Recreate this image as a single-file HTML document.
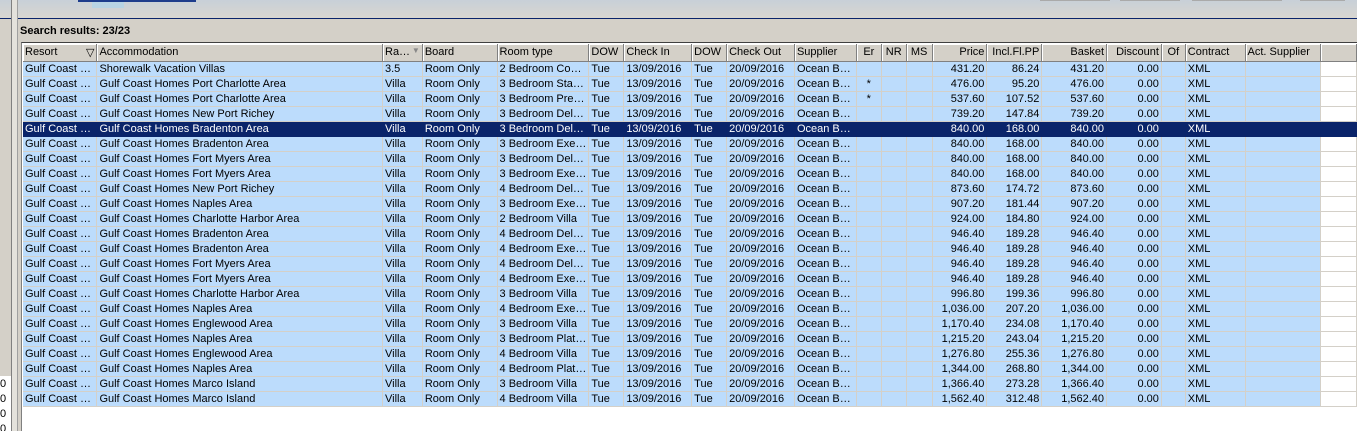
<!DOCTYPE html>
<html><head><meta charset="utf-8"><style>
*{margin:0;padding:0;box-sizing:border-box}
html,body{width:1357px;height:431px;overflow:hidden}
body{background:#d4d0c8;font-family:"Liberation Sans",sans-serif;font-size:11px;position:relative}
#top{position:absolute;left:0;top:0;width:1357px;height:19px;background:linear-gradient(#c8d0d8,#d8d6d0);border-bottom:1px solid #0a246a}
#sr{position:absolute;left:20px;top:25px;font-weight:bold;font-size:11px}
#left{position:absolute;left:0;top:20px;width:11px;height:411px;background:#d4d0c8}
#leftw{position:absolute;left:0;top:376px;width:11px;height:55px;background:#fff;font-size:11px;line-height:15px;padding-top:1px}
#l1{position:absolute;left:11px;top:0;width:1px;height:431px;background:#808080}
#l2{position:absolute;left:12px;top:0;width:5px;height:431px;background:#e4e2dc}
#l3{position:absolute;left:17px;top:0;width:1px;height:431px;background:#a0a0a0}
#grid{position:absolute;left:21px;top:42px;width:1336px;height:389px;background:#fff;border-left:1px solid #808080;border-top:1px solid #404040}
table{border-collapse:collapse;table-layout:fixed;position:absolute;left:1px;top:1px}
th{height:17px;background:#d4d0c8;font-weight:normal;text-align:left;padding:0 2px;border-right:1px solid #808080;border-bottom:1px solid #808080;box-shadow:inset 1px 1px 0 #fff;white-space:nowrap;overflow:hidden}
td{height:15px;background:#bcdcfc;border-right:1px solid #d4d0c8;border-bottom:1px solid #d4d0c8;padding:0 2px;white-space:nowrap;overflow:hidden;line-height:14px}
td.f{background:#fff}
.r{text-align:right}
.c{text-align:center}
tr.s td{background:#0a246a;color:#fff;border-color:#0a246a}
</style></head><body>
<div id="top">
<div style="position:absolute;left:92px;top:0;width:32px;height:8px;background:#b8d4e4"></div>
<div style="position:absolute;left:78px;top:0;width:118px;height:2px;background:#1c3c8c"></div>
<div style="position:absolute;left:1040px;top:0;width:70px;height:1px;background:#aaa"></div>
<div style="position:absolute;left:1120px;top:0;width:60px;height:1px;background:#aaa"></div>
<div style="position:absolute;left:1192px;top:0;width:90px;height:1px;background:#aaa"></div>
<div style="position:absolute;left:1300px;top:0;width:45px;height:1px;background:#aaa"></div>
</div>
<div id="left"></div>
<div id="leftw">0<br>0<br>0<br>0</div>
<div id="l1"></div><div id="l2"></div><div id="l3"></div>
<div id="sr">Search results: 23/23</div>
<div id="grid">
<table>
<colgroup><col style="width:74px"><col style="width:287px"><col style="width:40px"><col style="width:75px"><col style="width:89px"><col style="width:35px"><col style="width:68px"><col style="width:35px"><col style="width:68px"><col style="width:62px"><col style="width:25px"><col style="width:25px"><col style="width:26px"><col style="width:55px"><col style="width:55px"><col style="width:65px"><col style="width:55px"><col style="width:24px"><col style="width:60px"><col style="width:76px"><col style="width:36px"></colgroup>
<tr><th>Resort <span style="float:right">&#9661;</span></th><th>Accommodation</th><th>Ra… <span style="float:right;color:#888;font-size:8px">&#9660;</span></th><th>Board</th><th>Room type</th><th>DOW</th><th>Check In</th><th>DOW</th><th>Check Out</th><th>Supplier</th><th class="c">Er</th><th class="c">NR</th><th class="c">MS</th><th class="r">Price</th><th class="r">Incl.Fl.PP</th><th class="r">Basket</th><th class="r">Discount</th><th class="c">Of</th><th>Contract</th><th>Act. Supplier</th><th></th></tr>
<tr><td>Gulf Coast …</td><td>Shorewalk Vacation Villas</td><td>3.5</td><td>Room Only</td><td>2 Bedroom Co…</td><td>Tue</td><td>13/09/2016</td><td>Tue</td><td>20/09/2016</td><td>Ocean B…</td><td></td><td></td><td></td><td class="r">431.20</td><td class="r">86.24</td><td class="r">431.20</td><td class="r">0.00</td><td></td><td>XML</td><td></td><td class="f"></td></tr>
<tr><td>Gulf Coast …</td><td>Gulf Coast Homes Port Charlotte Area</td><td>Villa</td><td>Room Only</td><td>3 Bedroom Sta…</td><td>Tue</td><td>13/09/2016</td><td>Tue</td><td>20/09/2016</td><td>Ocean B…</td><td class="c">*</td><td></td><td></td><td class="r">476.00</td><td class="r">95.20</td><td class="r">476.00</td><td class="r">0.00</td><td></td><td>XML</td><td></td><td class="f"></td></tr>
<tr><td>Gulf Coast …</td><td>Gulf Coast Homes Port Charlotte Area</td><td>Villa</td><td>Room Only</td><td>3 Bedroom Pre…</td><td>Tue</td><td>13/09/2016</td><td>Tue</td><td>20/09/2016</td><td>Ocean B…</td><td class="c">*</td><td></td><td></td><td class="r">537.60</td><td class="r">107.52</td><td class="r">537.60</td><td class="r">0.00</td><td></td><td>XML</td><td></td><td class="f"></td></tr>
<tr><td>Gulf Coast …</td><td>Gulf Coast Homes New Port Richey</td><td>Villa</td><td>Room Only</td><td>3 Bedroom Del…</td><td>Tue</td><td>13/09/2016</td><td>Tue</td><td>20/09/2016</td><td>Ocean B…</td><td></td><td></td><td></td><td class="r">739.20</td><td class="r">147.84</td><td class="r">739.20</td><td class="r">0.00</td><td></td><td>XML</td><td></td><td class="f"></td></tr>
<tr class="s"><td>Gulf Coast …</td><td>Gulf Coast Homes Bradenton Area</td><td>Villa</td><td>Room Only</td><td>3 Bedroom Del…</td><td>Tue</td><td>13/09/2016</td><td>Tue</td><td>20/09/2016</td><td>Ocean B…</td><td></td><td></td><td></td><td class="r">840.00</td><td class="r">168.00</td><td class="r">840.00</td><td class="r">0.00</td><td></td><td>XML</td><td></td><td></td></tr>
<tr><td>Gulf Coast …</td><td>Gulf Coast Homes Bradenton Area</td><td>Villa</td><td>Room Only</td><td>3 Bedroom Exe…</td><td>Tue</td><td>13/09/2016</td><td>Tue</td><td>20/09/2016</td><td>Ocean B…</td><td></td><td></td><td></td><td class="r">840.00</td><td class="r">168.00</td><td class="r">840.00</td><td class="r">0.00</td><td></td><td>XML</td><td></td><td class="f"></td></tr>
<tr><td>Gulf Coast …</td><td>Gulf Coast Homes Fort Myers Area</td><td>Villa</td><td>Room Only</td><td>3 Bedroom Del…</td><td>Tue</td><td>13/09/2016</td><td>Tue</td><td>20/09/2016</td><td>Ocean B…</td><td></td><td></td><td></td><td class="r">840.00</td><td class="r">168.00</td><td class="r">840.00</td><td class="r">0.00</td><td></td><td>XML</td><td></td><td class="f"></td></tr>
<tr><td>Gulf Coast …</td><td>Gulf Coast Homes Fort Myers Area</td><td>Villa</td><td>Room Only</td><td>3 Bedroom Exe…</td><td>Tue</td><td>13/09/2016</td><td>Tue</td><td>20/09/2016</td><td>Ocean B…</td><td></td><td></td><td></td><td class="r">840.00</td><td class="r">168.00</td><td class="r">840.00</td><td class="r">0.00</td><td></td><td>XML</td><td></td><td class="f"></td></tr>
<tr><td>Gulf Coast …</td><td>Gulf Coast Homes New Port Richey</td><td>Villa</td><td>Room Only</td><td>4 Bedroom Del…</td><td>Tue</td><td>13/09/2016</td><td>Tue</td><td>20/09/2016</td><td>Ocean B…</td><td></td><td></td><td></td><td class="r">873.60</td><td class="r">174.72</td><td class="r">873.60</td><td class="r">0.00</td><td></td><td>XML</td><td></td><td class="f"></td></tr>
<tr><td>Gulf Coast …</td><td>Gulf Coast Homes Naples Area</td><td>Villa</td><td>Room Only</td><td>3 Bedroom Exe…</td><td>Tue</td><td>13/09/2016</td><td>Tue</td><td>20/09/2016</td><td>Ocean B…</td><td></td><td></td><td></td><td class="r">907.20</td><td class="r">181.44</td><td class="r">907.20</td><td class="r">0.00</td><td></td><td>XML</td><td></td><td class="f"></td></tr>
<tr><td>Gulf Coast …</td><td>Gulf Coast Homes Charlotte Harbor Area</td><td>Villa</td><td>Room Only</td><td>2 Bedroom Villa</td><td>Tue</td><td>13/09/2016</td><td>Tue</td><td>20/09/2016</td><td>Ocean B…</td><td></td><td></td><td></td><td class="r">924.00</td><td class="r">184.80</td><td class="r">924.00</td><td class="r">0.00</td><td></td><td>XML</td><td></td><td class="f"></td></tr>
<tr><td>Gulf Coast …</td><td>Gulf Coast Homes Bradenton Area</td><td>Villa</td><td>Room Only</td><td>4 Bedroom Del…</td><td>Tue</td><td>13/09/2016</td><td>Tue</td><td>20/09/2016</td><td>Ocean B…</td><td></td><td></td><td></td><td class="r">946.40</td><td class="r">189.28</td><td class="r">946.40</td><td class="r">0.00</td><td></td><td>XML</td><td></td><td class="f"></td></tr>
<tr><td>Gulf Coast …</td><td>Gulf Coast Homes Bradenton Area</td><td>Villa</td><td>Room Only</td><td>4 Bedroom Exe…</td><td>Tue</td><td>13/09/2016</td><td>Tue</td><td>20/09/2016</td><td>Ocean B…</td><td></td><td></td><td></td><td class="r">946.40</td><td class="r">189.28</td><td class="r">946.40</td><td class="r">0.00</td><td></td><td>XML</td><td></td><td class="f"></td></tr>
<tr><td>Gulf Coast …</td><td>Gulf Coast Homes Fort Myers Area</td><td>Villa</td><td>Room Only</td><td>4 Bedroom Del…</td><td>Tue</td><td>13/09/2016</td><td>Tue</td><td>20/09/2016</td><td>Ocean B…</td><td></td><td></td><td></td><td class="r">946.40</td><td class="r">189.28</td><td class="r">946.40</td><td class="r">0.00</td><td></td><td>XML</td><td></td><td class="f"></td></tr>
<tr><td>Gulf Coast …</td><td>Gulf Coast Homes Fort Myers Area</td><td>Villa</td><td>Room Only</td><td>4 Bedroom Exe…</td><td>Tue</td><td>13/09/2016</td><td>Tue</td><td>20/09/2016</td><td>Ocean B…</td><td></td><td></td><td></td><td class="r">946.40</td><td class="r">189.28</td><td class="r">946.40</td><td class="r">0.00</td><td></td><td>XML</td><td></td><td class="f"></td></tr>
<tr><td>Gulf Coast …</td><td>Gulf Coast Homes Charlotte Harbor Area</td><td>Villa</td><td>Room Only</td><td>3 Bedroom Villa</td><td>Tue</td><td>13/09/2016</td><td>Tue</td><td>20/09/2016</td><td>Ocean B…</td><td></td><td></td><td></td><td class="r">996.80</td><td class="r">199.36</td><td class="r">996.80</td><td class="r">0.00</td><td></td><td>XML</td><td></td><td class="f"></td></tr>
<tr><td>Gulf Coast …</td><td>Gulf Coast Homes Naples Area</td><td>Villa</td><td>Room Only</td><td>4 Bedroom Exe…</td><td>Tue</td><td>13/09/2016</td><td>Tue</td><td>20/09/2016</td><td>Ocean B…</td><td></td><td></td><td></td><td class="r">1,036.00</td><td class="r">207.20</td><td class="r">1,036.00</td><td class="r">0.00</td><td></td><td>XML</td><td></td><td class="f"></td></tr>
<tr><td>Gulf Coast …</td><td>Gulf Coast Homes Englewood Area</td><td>Villa</td><td>Room Only</td><td>3 Bedroom Villa</td><td>Tue</td><td>13/09/2016</td><td>Tue</td><td>20/09/2016</td><td>Ocean B…</td><td></td><td></td><td></td><td class="r">1,170.40</td><td class="r">234.08</td><td class="r">1,170.40</td><td class="r">0.00</td><td></td><td>XML</td><td></td><td class="f"></td></tr>
<tr><td>Gulf Coast …</td><td>Gulf Coast Homes Naples Area</td><td>Villa</td><td>Room Only</td><td>3 Bedroom Plat…</td><td>Tue</td><td>13/09/2016</td><td>Tue</td><td>20/09/2016</td><td>Ocean B…</td><td></td><td></td><td></td><td class="r">1,215.20</td><td class="r">243.04</td><td class="r">1,215.20</td><td class="r">0.00</td><td></td><td>XML</td><td></td><td class="f"></td></tr>
<tr><td>Gulf Coast …</td><td>Gulf Coast Homes Englewood Area</td><td>Villa</td><td>Room Only</td><td>4 Bedroom Villa</td><td>Tue</td><td>13/09/2016</td><td>Tue</td><td>20/09/2016</td><td>Ocean B…</td><td></td><td></td><td></td><td class="r">1,276.80</td><td class="r">255.36</td><td class="r">1,276.80</td><td class="r">0.00</td><td></td><td>XML</td><td></td><td class="f"></td></tr>
<tr><td>Gulf Coast …</td><td>Gulf Coast Homes Naples Area</td><td>Villa</td><td>Room Only</td><td>4 Bedroom Plat…</td><td>Tue</td><td>13/09/2016</td><td>Tue</td><td>20/09/2016</td><td>Ocean B…</td><td></td><td></td><td></td><td class="r">1,344.00</td><td class="r">268.80</td><td class="r">1,344.00</td><td class="r">0.00</td><td></td><td>XML</td><td></td><td class="f"></td></tr>
<tr><td>Gulf Coast …</td><td>Gulf Coast Homes Marco Island</td><td>Villa</td><td>Room Only</td><td>3 Bedroom Villa</td><td>Tue</td><td>13/09/2016</td><td>Tue</td><td>20/09/2016</td><td>Ocean B…</td><td></td><td></td><td></td><td class="r">1,366.40</td><td class="r">273.28</td><td class="r">1,366.40</td><td class="r">0.00</td><td></td><td>XML</td><td></td><td class="f"></td></tr>
<tr><td>Gulf Coast …</td><td>Gulf Coast Homes Marco Island</td><td>Villa</td><td>Room Only</td><td>4 Bedroom Villa</td><td>Tue</td><td>13/09/2016</td><td>Tue</td><td>20/09/2016</td><td>Ocean B…</td><td></td><td></td><td></td><td class="r">1,562.40</td><td class="r">312.48</td><td class="r">1,562.40</td><td class="r">0.00</td><td></td><td>XML</td><td></td><td class="f"></td></tr>
</table>
</div>
</body></html>
